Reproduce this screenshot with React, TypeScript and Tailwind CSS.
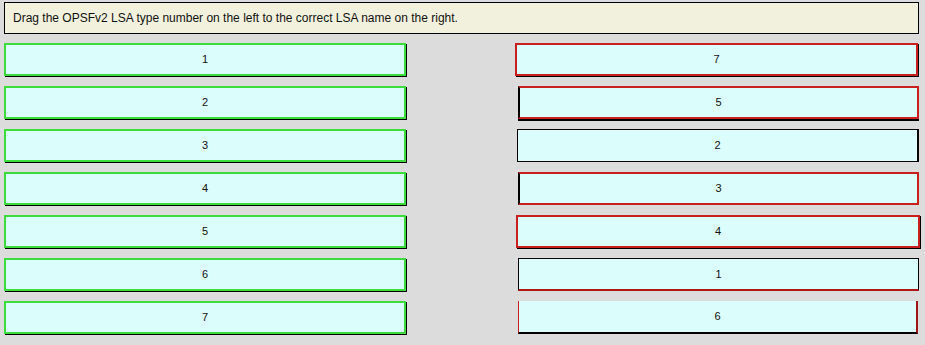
import React from "react";

const left = ["1", "2", "3", "4", "5", "6", "7"];

const right: { label: string; cls: string }[] = [
  { label: "7", cls: "w-[403px] mr-[1px] border-2 border-[#c8201e] shadow-[1px_1px_0_#000]" },
  { label: "5", cls: "w-[401px] border-2 border-[#c8201e] border-l-black shadow-[0_2px_0_#000]" },
  { label: "2", cls: "w-[402px] border border-black border-r-2" },
  { label: "3", cls: "w-[401px] border-2 border-[#c8201e] border-l-black" },
  { label: "4", cls: "w-[404px] -mr-[1px] border-2 border-[#c8201e] shadow-[1px_1px_0_#000]" },
  { label: "1", cls: "w-[401px] border border-black border-b-2 border-b-[#b01818]" },
  { label: "6", cls: "w-[400px] mr-[1px] border-l border-r-2 border-b-2 border-l-[#c8201e] border-r-[#a01616] border-b-black" },
];

function Box({ label, cls }: { label: string; cls: string }) {
  return (
    <div
      className={`h-[33px] flex items-center justify-center bg-[#dbfefd] text-[11px] text-[#111] ${cls}`}
    >
      {label}
    </div>
  );
}

export default function App() {
  return (
    <div
      className="w-[925px] h-[345px] bg-[#dcdcdc] pl-[4px] pr-[6px] pt-[2px] overflow-hidden"
      style={{ fontFamily: '"Liberation Sans", Arial, sans-serif' }}
    >
      <div className="h-[32px] border border-black bg-[#f2f1dd] flex items-center pl-[8px] text-[12px] text-[#111]">
        Drag the OPSFv2 LSA type number on the left to the correct LSA name on the right.
      </div>
      <div className="mt-[9px] flex justify-between">
        <div className="flex flex-col gap-[10px]">
          {left.map((l, i) => (
            <Box
              key={i}
              label={l}
              cls="w-[402px] border-2 border-[#3cdc3c] shadow-[1px_1px_0_#000]"
            />
          ))}
        </div>
        <div className="flex flex-col items-end gap-[10px]">
          {right.map((r, i) => (
            <Box key={i} label={r.label} cls={r.cls} />
          ))}
        </div>
      </div>
    </div>
  );
}
